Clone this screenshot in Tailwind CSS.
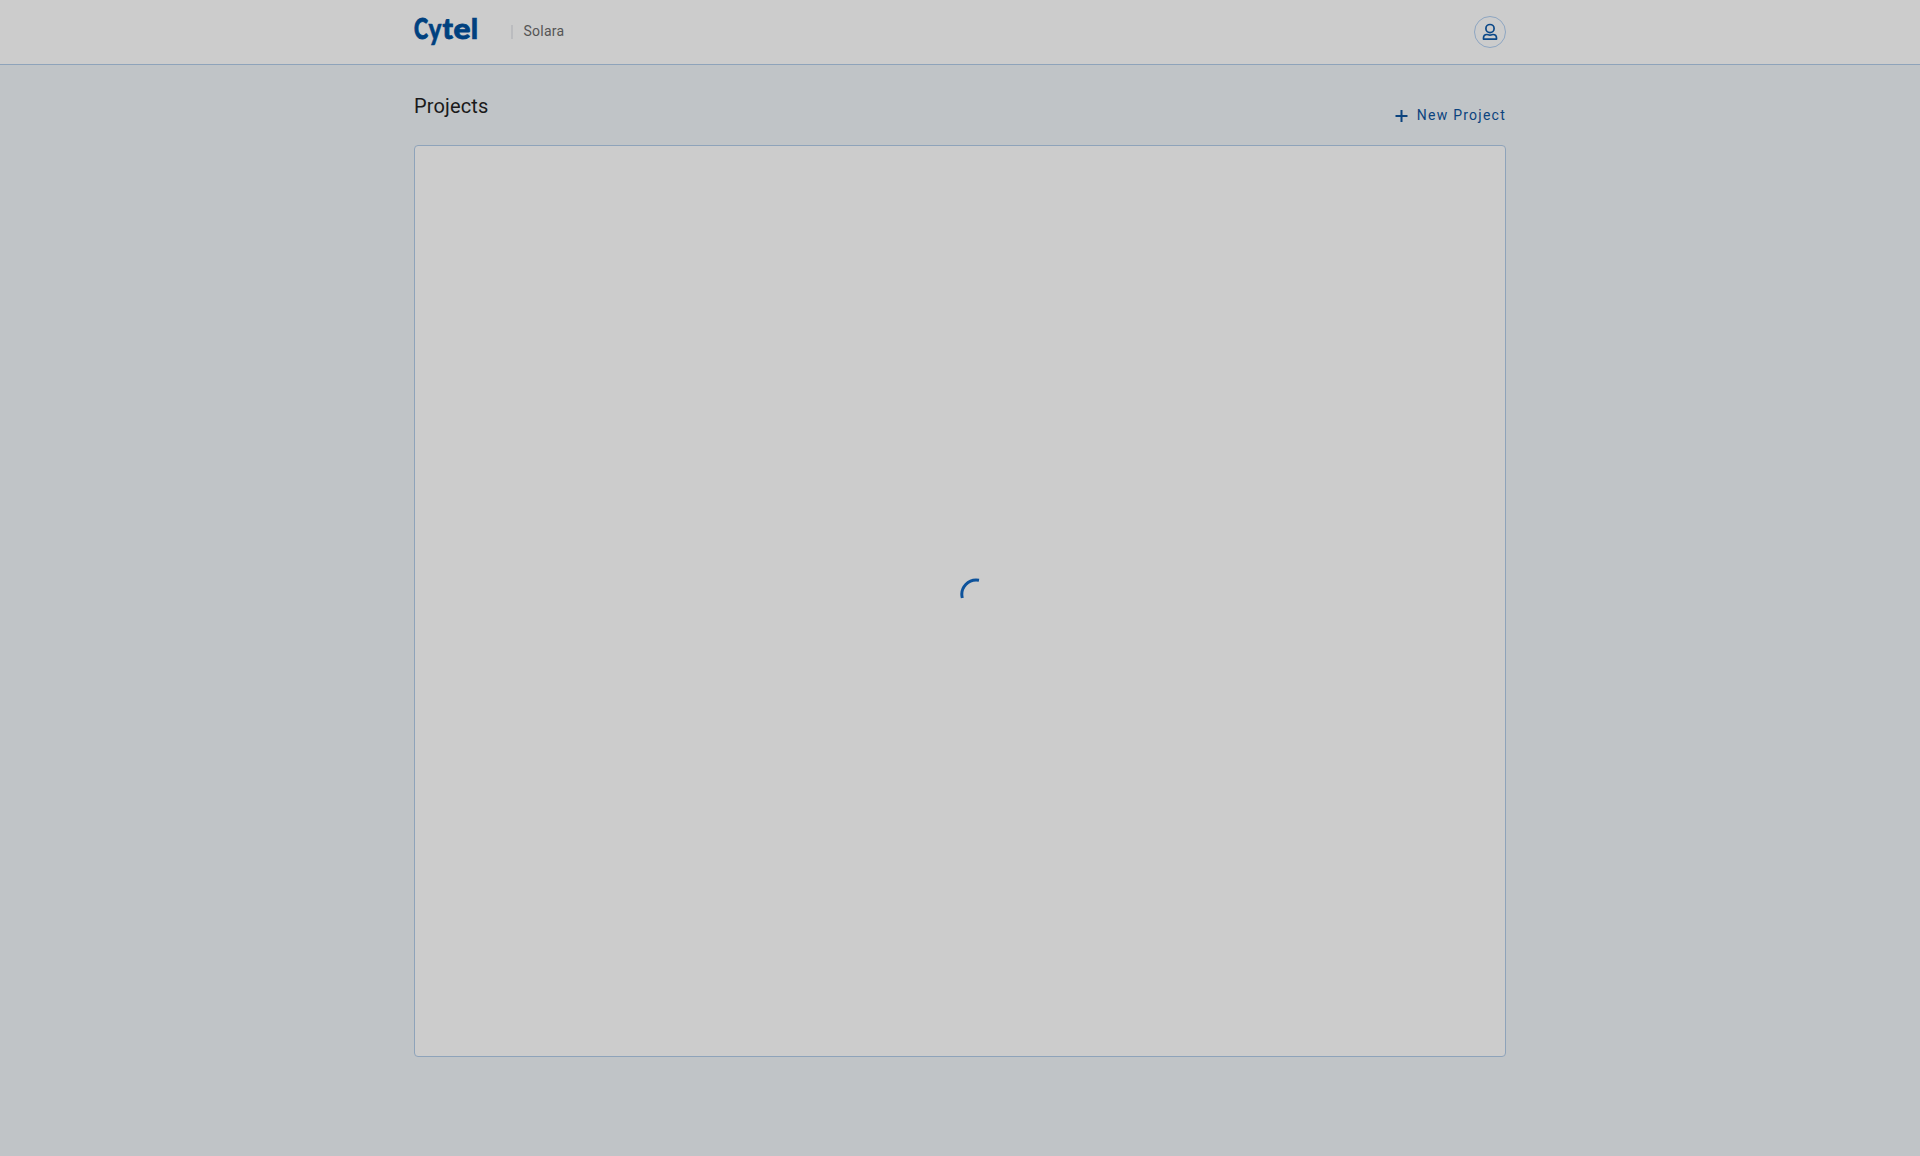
<!DOCTYPE html>
<html lang="en">
<head>
<meta charset="utf-8">
<title>Solara</title>
<script src="https://cdn.jsdelivr.net/npm/@tailwindcss/browser@4"></script>
</head>
<body class="h-screen overflow-hidden bg-[#c0c4c7] font-['Roboto',sans-serif]">
<header class="h-[65px] border-b border-[#8ea3ba] bg-[#cccccc]">
  <div class="mx-auto flex h-16 w-[1092px] items-center">
    <svg width="66" height="34" viewBox="0 0 66 34" class="mt-px overflow-visible" aria-label="Cytel">
      <g fill="#00417f" stroke="#00417f" font-family="Lato, sans-serif" font-weight="900">
        <text x="0" y="22.8" font-size="29" stroke-width=".9" textLength="14" lengthAdjust="spacingAndGlyphs">C</text>
        <text x="14.600" y="23.600" font-size="31" stroke-width=".5" textLength="13" lengthAdjust="spacingAndGlyphs">y</text>
        <text x="28.500" y="22.8" font-size="28" stroke-width=".8" textLength="10.500" lengthAdjust="spacingAndGlyphs">t</text>
        <text x="39.5" y="22.8" font-size="28" stroke-width=".8" textLength="17" lengthAdjust="spacingAndGlyphs">e</text>
        <text x="56.700" y="22.8" font-size="29" stroke-width=".6">l</text>
      </g>
    </svg>
    <div class="ml-[31px] h-3.5 w-0.5 bg-[#bbbcbf]"></div>
    <div class="ml-[10.500px] text-sm leading-5 tracking-[0.25px] text-[#555555] -mt-0.5">Solara</div>
    <button class="ml-auto flex size-8 items-center justify-center rounded-full border border-[#8ea6c2]" aria-label="Account">
      <svg width="16" height="18" viewBox="0 0 16 18" fill="none" stroke="#0b4888" stroke-width="1.7">
        <circle cx="8" cy="5.6" r="4.1"/>
        <path d="M1.500 16.100v-1.200c0-2 1.600-3.400 3.500-3.400.800 0 1.600.600 3 .600s2.200-.600 3-.600c1.900 0 3.500 1.400 3.500 3.400v1.200z" stroke-linejoin="round"/>
      </svg>
    </button>
  </div>
</header>
<main class="mx-auto w-[1092px]">
  <div class="flex h-20 items-start justify-between">
    <h1 class="mt-[27px] text-xl leading-7 tracking-[0.13px] text-[#1a1a1a]">Projects</h1>
    <button class="mt-10 flex items-center text-sm leading-5 tracking-[1.25px] text-[#0b437e]">
      <svg class="mr-2.25 mt-0.5" width="13" height="14" viewBox="0 0 13 14" stroke="#0b437e" stroke-width="2"><path d="M6.500 1v12M.5 7h12"/></svg>
      <span>New Project</span>
    </button>
  </div>
  <section class="flex h-[912px] rounded-[4px] border border-[#8ea3ba] bg-[#cccccc]"></section>
</main>
<div class="fixed left-[960px] top-[578px]">
  <svg width="34" height="34" viewBox="0 0 34 34" fill="none" stroke="#0d529b" stroke-width="3"><path d="M2.300 20A14.500 14.500 0 0 1 19 2.200"/></svg>
</div>
</body>
</html>
